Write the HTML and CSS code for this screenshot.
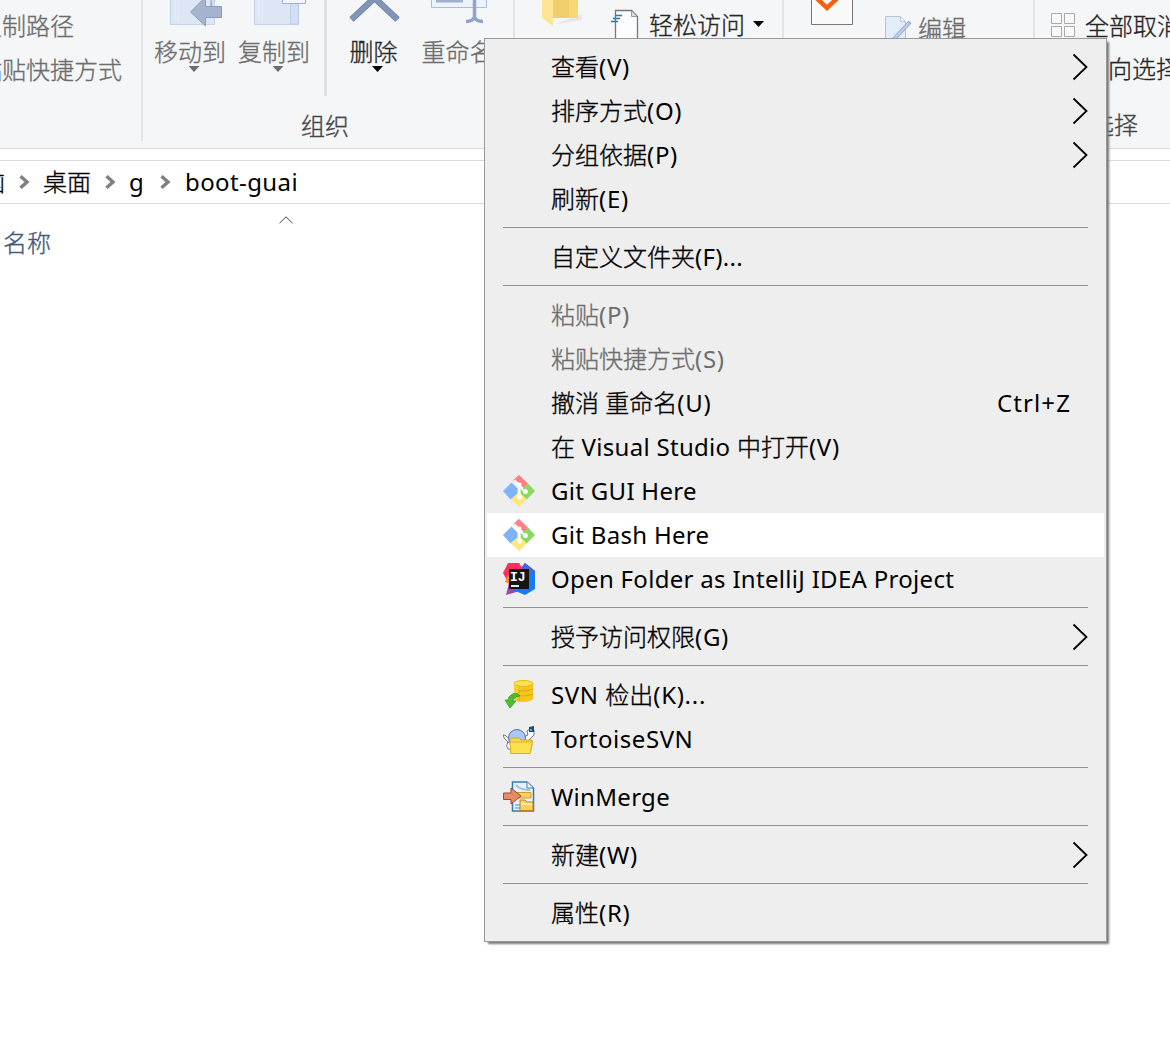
FILE: index.html
```html
<!DOCTYPE html>
<html lang="zh-CN">
<head>
<meta charset="utf-8">
<title>boot-guai</title>
<link rel="stylesheet" href="styles.css">
</head>
<body>
<svg class="defs" width="0" height="0">
  <symbol id="next" viewBox="0 0 16 28"><path d="M1.500 1.500 14.500 14 1.500 26.500" fill="none" stroke="#000" stroke-width="1.800"/></symbol>
  <symbol id="crumb" viewBox="0 0 12 14"><path d="M1.500 1.200 8 7 1.500 12.800" fill="none" stroke="#808080" stroke-width="3.400"/></symbol>
  <symbol id="git" viewBox="0 0 32 32">
    <path fill="#ff8080" d="M16 0 25 8.500 19.500 14 17.500 12 17.500 8.500 13 7 10 5.500 15 .5Z"/>
    <path fill="#80b3ff" d="M8.500 7.500 14.500 13.500V18.500L7.500 24.500 0 16Z"/>
    <path fill="#87d960" d="M25 8.500 32 16 23.500 24.500 17.500 18.500V14L20 13Z"/>
    <path fill="#ffe680" d="M14.500 18.500H17.500L23.500 24.500 16 32 8 24.500Z"/>
    <path d="M11.500 5 20 13.500M16.500 10V21M18 13 21.500 16.500" stroke="#fff" stroke-width="1.700" fill="none"/>
    <circle cx="16.500" cy="9.500" r="2" fill="#fff"/><circle cx="22.300" cy="16.500" r="2.500" fill="#fff"/><circle cx="16.500" cy="22" r="2.500" fill="#fff"/>
  </symbol>
</svg>
<main class="window">
  <section class="ribbon">
    <div class="group clipboard">
      <span class="dim">复制路径</span>
      <span class="dim">粘贴快捷方式</span>
    </div>
    <div class="group organize">
      <div class="tools">
        <div class="tool dim">
          <svg width="84" height="28" viewBox="0 0 84 28"><path d="M22.500 0V24.500H66.500V0" fill="#dce6f4" stroke="#c5d3ea"/><path d="M27 0V22M30 0V22" stroke="#e9eff9"/><path d="M61 8 67 1V-1" stroke="#b9c9e3" fill="none"/><path d="M63-4V6.500H73.500V17.500H57.500V26L42.500 12 57.500-3V6.500H64" fill="#a4b3ce" stroke="#8c9dbb"/></svg>
          <span>移动到</span><i class="down"></i>
        </div>
        <div class="tool dim">
          <svg width="84" height="28" viewBox="0 0 84 28"><path d="M22.500 0V24.500H66.500V0" fill="#dce6f4" stroke="#c5d3ea"/><path d="M27 0V22M30 0V22" stroke="#e9eff9"/><path d="M58.500 24V7Q58.500 3 62 3.500T66.500 6V24Z" fill="#d4e0f2" stroke="#bccce6"/><path d="M50.500-1V3.500H73.500V-1" fill="#f3f7fd" stroke="#9fafcb"/></svg>
          <span>复制到</span><i class="down"></i>
        </div>
      </div>
      <div class="tools second">
        <div class="tool">
          <svg width="84" height="28" viewBox="0 0 84 28"><path d="M20.500 19.500 43.500-2 66.500 19.500" fill="none" stroke="#7186a9" stroke-width="6.500"/><path d="M20.500 19.500 43.500-2 66.500 19.500" fill="none" stroke="#8195b7" stroke-width="4.500"/></svg>
          <span>删除</span><i class="down"></i>
        </div>
        <div class="tool dim">
          <svg width="84" height="28" viewBox="0 0 84 28"><path d="M19.500-1V7.500H74.500V-1" fill="#ecf3fc" stroke="#aabddb"/><path d="M24 0H51V2.500H24Z" fill="#9db0d0"/><path d="M62.500 0V17Q61 21.500 54 21.500M62.500 17Q64 21.500 71 21.500" fill="none" stroke="#91a4c6" stroke-width="3.500"/></svg>
          <span>重命名</span>
        </div>
      </div>
      <span class="caption">组织</span>
    </div>
    <div class="group create">
      <svg class="folder" width="44" height="30" viewBox="0 0 44 30"><path d="M15 24 41 14V20Z" fill="#e4e6e9"/><path d="M10 0H37V18H10Z" fill="#efcf6c"/><path d="M28 0H37V18H28Z" fill="#f8d774"/><path d="M1 0H12V26L1 18Z" fill="#ffe593"/></svg>
      <svg class="access" width="28" height="38" viewBox="0 0 28 38"><path d="M4.500 40V10.500H20.500L26.500 16.500V40" fill="#fcfdfe" stroke="#777" stroke-width="1.300"/><path d="M20.500 11V16.500H26" fill="#ddd" stroke="#999"/><path d="M4 15.500H11M2 18.500H9M0 21.500H7" stroke="#2479bd" stroke-width="1.700"/></svg>
      <span class="accesslabel">轻松访问</span><i class="down"></i>
    </div>
    <div class="group open">
      <svg class="check" width="44" height="28" viewBox="0 0 44 28"><path d="M1.500-2H42.500V24.500H1.500Z" fill="#f9f9fa" stroke="#777"/><path d="M5.500-3 17 8 28.500-3" fill="none" stroke="#f75e0d" stroke-width="4.500"/></svg>
      <svg class="editicon" width="30" height="25" viewBox="0 0 30 25"><path d="M1.500 25V1.500H16.500L21.500 6.500V25" fill="#e3ecf9" stroke="#b3c3de"/><path d="M16.500 2V6.500H21" fill="#fff" stroke="#b3c3de"/><path d="M9 25 26 7" stroke="#93a8cc" stroke-width="4"/><path d="M10 24 25 8" stroke="#c1d0e8" stroke-width="2"/></svg>
      <span class="dim editlabel">编辑</span>
    </div>
    <div class="group select">
      <div class="line"><svg width="25" height="25" viewBox="0 0 25 25"><path d="M.5.500H10.500V10.500H.5ZM13.500.500H23.500V10.500H13.500ZM.5 13.500H10.500V23.500H.5ZM13.500 13.500H23.500V23.500H13.500Z" fill="#f9f9f9" stroke="#aaa"/></svg><span>全部取消</span></div>
      <div class="line inverse"><span>反向选择</span></div>
      <span class="caption">选择</span>
    </div>
  </section>
  <nav class="address">
    <span class="pc">电脑</span><svg width="12" height="14"><use href="#crumb"/></svg>
    <span>桌面</span><svg width="12" height="14"><use href="#crumb"/></svg>
    <span class="g"><b>g</b></span><svg width="12" height="14"><use href="#crumb"/></svg>
    <span class="path"><b>boot-guai</b></span>
  </nav>
  <section class="files">
    <svg class="sort" width="14" height="8" viewBox="0 0 14 8"><path d="M.5 7.200 7 .8 13.500 7.200" fill="none" stroke="#444"/></svg>
    <span class="name">名称</span>
  </section>
</main>
<div class="menu">
  <div class="item"><span>查看<b class="hint">(V)</b></span><svg class="next"><use href="#next"/></svg></div>
  <div class="item"><span>排序方式<b class="hint">(O)</b></span><svg class="next"><use href="#next"/></svg></div>
  <div class="item"><span>分组依据<b class="hint">(P)</b></span><svg class="next"><use href="#next"/></svg></div>
  <div class="item"><span>刷新<b class="hint">(E)</b></span></div>
  <hr>
  <div class="item"><span>自定义文件夹<b>(F)...</b></span></div>
  <hr>
  <div class="item off"><span>粘贴<b class="hint">(P)</b></span></div>
  <div class="item off"><span>粘贴快捷方式<b class="hint">(S)</b></span></div>
  <div class="item"><span>撤消 重命名<b class="hint">(U)</b></span><span class="key"><b>Ctrl+Z</b></span></div>
  <div class="item"><span>在<b> Visual Studio </b>中打开<b class="hint">(V)</b></span></div>
  <div class="item"><svg class="icon"><use href="#git"/></svg><span><b>Git GUI Here</b></span></div>
  <div class="item hot"><svg class="icon"><use href="#git"/></svg><span><b>Git Bash Here</b></span></div>
  <div class="item"><svg class="icon" viewBox="0 0 32 32">
    <path d="M5 0H16L20 6 8 25 0 10Z" fill="#fe2e62"/><path d="M4 13 8 10V21L2 19Z" fill="#f58b24"/><path d="M6 20 3 32 20 27 11 20Z" fill="#9d4aab"/><path d="M18 5 22 0 32 8V26L22 32 10 27 24 20Z" fill="#147bfa"/><path d="M18 5 22 0 32 8 26 12Z" fill="#4965d8"/>
    <path d="M6 6H26V26H6Z" fill="#151515"/><path d="M8 23H16" stroke="#fff" stroke-width="1.800"/><text class="ij" x="7" y="18">IJ</text></svg><span><b>Open Folder as IntelliJ IDEA Project</b></span></div>
  <hr>
  <div class="item"><span>授予访问权限<b class="hint">(G)</b></span><svg class="next"><use href="#next"/></svg></div>
  <hr>
  <div class="item"><svg class="icon" viewBox="0 0 32 32">
    <path d="M11 5V20Q12 23 20 23T30 20V5Z" fill="#f7c51e"/><path d="M11 10Q20 14 30 10M11 15Q20 19 30 15M16 12V22" stroke="#dda80c" fill="none"/><path d="M12 5V19M14 6V20" stroke="#ffe34d"/><ellipse cx="20.500" cy="4.500" rx="9.500" ry="3" fill="#ffe34b" stroke="#e8b91b"/>
    <path d="M17 17Q13 12 8 16 5 18 5 21H2L7 29 13 22H10Q10 18 17 17Z" fill="#4cbd2c" stroke="#329323" stroke-width=".7"/></svg><span><b class="svn">SVN </b>检出<b class="hint">(K)...</b></span></div>
  <div class="item"><svg class="icon tortoise" viewBox="0 0 32 32">
    <path d="M6 17Q0 12 0 9 2 8 5 12M5 16Q2 20 5 23H8M21 13Q22 9 25 9L24 5 28 2 31 4V9L26 14 23 15Z" fill="#fff" stroke="#555" stroke-width=".8"/><circle cx="14" cy="12" r="8.500" fill="#a9c8fc" stroke="#5671a3"/><path d="M26 1 31 0V6L26 6Z" fill="#1d4a70"/><path d="M27 3H29V5H27Z" fill="#4fb4ec"/><path d="M7 12H16L18 14H29V19L27 27.500H8Z" fill="#f8db4a" stroke="#d2a526"/><path d="M7 16H29.500L27 27.500H8Z" fill="#ffe14f" stroke="#dcb02c"/></svg><span><b class="svn">TortoiseSVN</b></span></div>
  <hr>
  <div class="item"><svg class="icon" viewBox="0 0 32 32">
    <path d="M9.500 1H24L30.500 7V30H9.500Z" fill="#e8f2fc" stroke="#3579bd" stroke-width="1.500"/><path d="M24 1V7H30" fill="#fff" stroke="#3579bd"/><path d="M13 4Q17 9 27 9M12 24H18M12 27H18" stroke="#9abce0" stroke-width="2" fill="none"/><path d="M14 11.500H28V17H14Z" fill="#ffd05a" stroke="#d99825"/><path d="M.5 12H8V7L18 15 8 23V18.500H.5Z" fill="#e98b62" stroke="#994a2c"/><path d="M17 19H22L24 21H30V29.500H17Z" fill="#ffcf65" stroke="#bd841d"/><path d="M18 23H29" stroke="#ffebab" stroke-width="2"/></svg><span><b>WinMerge</b></span></div>
  <hr>
  <div class="item"><span>新建<b class="hint">(W)</b></span><svg class="next"><use href="#next"/></svg></div>
  <hr>
  <div class="item"><span>属性<b class="hint">(R)</b></span></div>
</div>
</body>
</html>
```
FILE: styles.css
```css
* { box-sizing: border-box; }
body {
  margin: 0; width: 1170px; height: 1038px; overflow: hidden; background: #fff; color: #000;
  font: 300 24px/32px "Noto Sans", "Noto Sans CJK SC", sans-serif;
  -webkit-text-stroke: .35px;
}
b { font-weight: 400; -webkit-text-stroke: 0; white-space: pre; }
.defs { position: absolute; }
svg { display: block; flex: none; }
span { white-space: nowrap; }
.ribbon { display: flex; height: 149px; background: #f5f6f8; border-bottom: 1px solid #d9dadc; color: #262626; }
.dim { color: #6d6d6d; }
.group { position: relative; display: flex; height: 141px; overflow: hidden; flex: none; border-right: 2px solid #e3e4e6; }
.clipboard { width: 143px; flex-direction: column; gap: 12px; padding-top: 10px; }
.clipboard span { margin-left: -22px; }
.organize { width: 372px; padding-left: 5px; flex-wrap: wrap; align-content: flex-start; }
.tools { display: flex; width: 179px; height: 96px; border-right: 3px solid #dfe0e2; }
.second { border: 0; width: 180px; padding-left: 1px; }
.tool { display: flex; flex-direction: column; align-items: center; width: 84px; }
.tool svg { margin-left: -1px; }
.tool span { margin-top: 8px; height: 30px; }
.second .tool { width: 91px; }
.second .tool + .tool { margin-left: -7px; }
.second .tool svg { margin-left: -2px; }
.second .tool + .tool svg { margin-left: -7px; }
.down { width: 11px; height: 6px; margin-left: 8px; background: currentColor; clip-path: polygon(0 0, 100% 0, 50% 100%); }
.second .down, .create .down { background: #000; }
.caption { color: #444; }
.organize .caption { margin: 14px 0 0 153px; }
.create { width: 269px; padding-left: 26px; align-items: flex-start; }
.access { margin-left: 26px; }
.accesslabel { margin: 9px 0 0 10px; }
.create .down { margin: 21px 0 0 8px; }
.open { width: 251px; padding-left: 26px; }
.editicon { margin: 15px 0 0 30px; }
.editlabel { margin: 13px 0 0 4px; }
.select { width: 136px; border: 0; padding: 10px 0 0 16px; flex-direction: column; }
.line { display: flex; gap: 9px; height: 44px; }
.line svg { margin-top: 3px; }
.inverse { padding-left: 33px; }
.select .caption { margin: 14px 0 0 39px; }
.address { display: flex; align-items: center; height: 44px; margin-top: 11px; border: solid #d9d9d9; border-width: 1px 0; }
.address svg { margin: 0 12px 0 14px; }
.pc { margin-left: -43px; }
.g { width: 17px; }
.path { margin-left: 1px; letter-spacing: .4px; }
.files { display: flex; flex-direction: column; align-items: flex-start; }
.sort { margin: 12px 0 0 279px; }
.name { margin: 3px 0 0 3px; color: #43597b; }
.menu {
  position: absolute; left: 484px; top: 38px; width: 623px; height: 904px; padding: 6px 2px;
  background: #eee; border: 1px solid #999; box-shadow: 3px 3px 2px -1px #777;
}
.item { display: flex; align-items: center; height: 44px; padding: 0 16px 0 64px; }
.item b { letter-spacing: .3px; }
.item .hint { letter-spacing: .7px; }
.item .svn { letter-spacing: .55px; }
.item > span { margin-top: -1px; }
.icon { width: 32px; height: 32px; margin: 0 16px 0 -48px; -webkit-text-stroke: 0; }
.tortoise { position: relative; top: 3px; }
.next { width: 16px; height: 28px; margin-left: auto; }
.key { margin-left: auto; margin-right: 17px; }
.key b { letter-spacing: 1.1px; }
.hot { background: #fff; }
.off { color: #6d6d6d; }
.menu hr { width: 585px; height: 1px; margin: 6px 0 7px 16px; border: 0; background: #919191; }
.ij { font: bold 13px "Liberation Mono", monospace; fill: #fff; }
```
